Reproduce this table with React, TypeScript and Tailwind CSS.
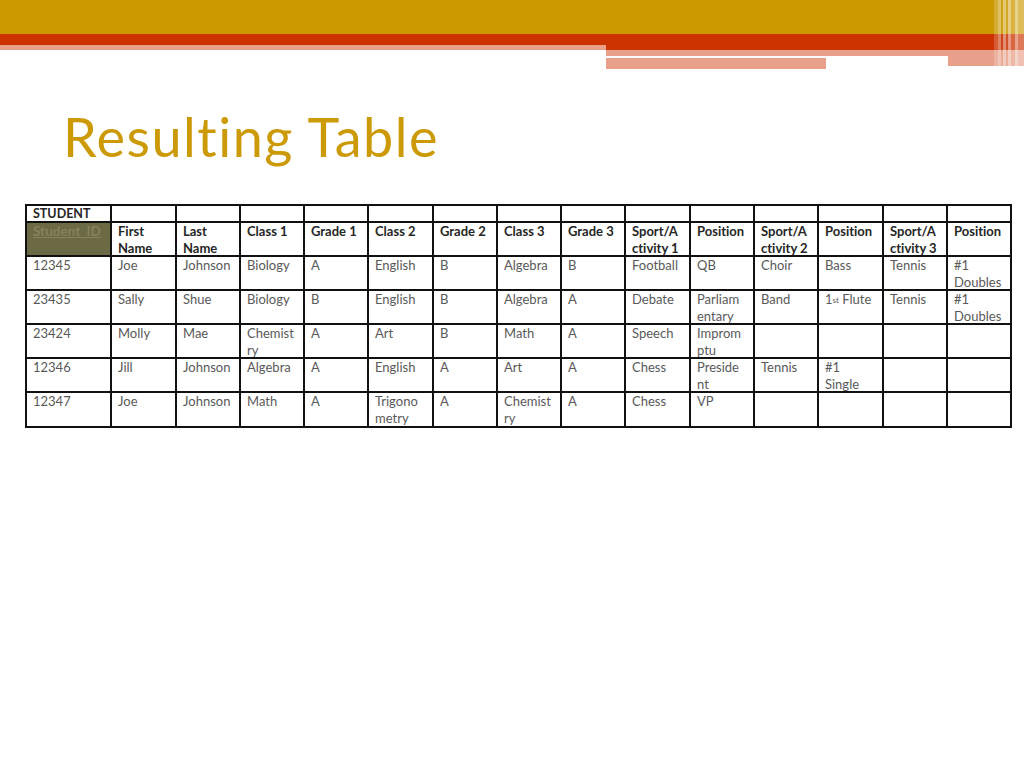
import React from "react";

type Cell = string[] | React.ReactNode;

const colWidths = "grid-cols-[83px_63px_62px_62px_62px_63px_62px_62px_62px_63px_62px_62px_63px_62px_62px]";

const headers: string[][] = [
  ["First", "Name"],
  ["Last", "Name"],
  ["Class 1"],
  ["Grade 1"],
  ["Class 2"],
  ["Grade 2"],
  ["Class 3"],
  ["Grade 3"],
  ["Sport/A", "ctivity 1"],
  ["Position"],
  ["Sport/A", "ctivity 2"],
  ["Position"],
  ["Sport/A", "ctivity 3"],
  ["Position"],
];

const firstFlute = (
  <>
    1<sup className="relative -top-[1px] text-[8px]">st</sup> Flute
  </>
);

const rows: Cell[][] = [
  [["12345"], ["Joe"], ["Johnson"], ["Biology"], ["A"], ["English"], ["B"], ["Algebra"], ["B"], ["Football"], ["QB"], ["Choir"], ["Bass"], ["Tennis"], ["#1", "Doubles"]],
  [["23435"], ["Sally"], ["Shue"], ["Biology"], ["B"], ["English"], ["B"], ["Algebra"], ["A"], ["Debate"], ["Parliam", "entary"], ["Band"], firstFlute, ["Tennis"], ["#1", "Doubles"]],
  [["23424"], ["Molly"], ["Mae"], ["Chemist", "ry"], ["A"], ["Art"], ["B"], ["Math"], ["A"], ["Speech"], ["Improm", "ptu"], [], [], [], []],
  [["12346"], ["Jill"], ["Johnson"], ["Algebra"], ["A"], ["English"], ["A"], ["Art"], ["A"], ["Chess"], ["Preside", "nt"], ["Tennis"], ["#1", "Single"], [], []],
  [["12347"], ["Joe"], ["Johnson"], ["Math"], ["A"], ["Trigono", "metry"], ["A"], ["Chemist", "ry"], ["A"], ["Chess"], ["VP"], [], [], [], []],
];

function Lines({ c }: { c: Cell }) {
  if (Array.isArray(c)) {
    return (
      <>
        {(c as string[]).map((l, i) => (
          <div key={i}>{l}</div>
        ))}
      </>
    );
  }
  return <div>{c}</div>;
}

function Banner() {
  return (
    <div className="relative h-[70px]">
      <div className="h-[34px] bg-[#cc9900]" />
      <div className="flex">
        <div className="w-[606px]">
          <div className="h-[11px] bg-[#cc3300]" />
          <div className="h-[5px] bg-[#e8a08a]" />
        </div>
        <div className="flex-1">
          <div className="h-[16px] bg-[#cc3300]" />
          <div className="h-[6px] bg-[#e8a08a]" />
          <div className="flex h-[2px]">
            <div className="w-[342px] bg-white" />
            <div className="flex-1 bg-[#e8a08a]" />
          </div>
          <div className="flex h-[11px] items-start">
            <div className="h-[11px] w-[220px] bg-[#e8a08a]" />
            <div className="w-[122px]" />
            <div className="h-[8px] flex-1 bg-[#e8a08a]" />
          </div>
        </div>
      </div>
      {/* pale vertical streaks on the right edge */}
      <div className="absolute right-0 top-0 flex h-[68px] w-[30px]">
        <div className="w-[4px] bg-white/20" />
        <div className="w-[3px] bg-white/40" />
        <div className="w-[2px] bg-white/10" />
        <div className="w-[3px] bg-white/45" />
        <div className="w-[2px] bg-white/15" />
        <div className="w-[3px] bg-white/50" />
        <div className="w-[4px] bg-white/25" />
        <div className="w-[3px] bg-white/55" />
        <div className="w-[6px] bg-white/35" />
      </div>
    </div>
  );
}

export default function App() {
  return (
    <div className="h-[768px] w-[1024px] overflow-hidden bg-white [font-variant-ligatures:none]">
      <Banner />
      <div className="pl-[63px] pt-[36px]">
        <h1 className="font-['Lato',sans-serif] text-[54px] leading-[62px] tracking-[1.5px] text-[#cc9a06]">Resulting Table</h1>
      </div>
      <div className="ml-[25px] mt-[36px] w-fit">
        <div className={`grid ${colWidths} gap-[2px] bg-[#111] p-[2px] font-['Lato','Noto_Sans',sans-serif] text-[13px] leading-[17px] text-[#595959]`}>
          <div className="h-[15px] bg-white pl-[6px] text-[12.5px] font-bold leading-[16px] text-[#262626]">STUDENT</div>
          {Array.from({ length: 14 }).map((_, i) => (
            <div key={`e${i}`} className="h-[15px] bg-white" />
          ))}
          <div className="h-[32px] bg-[#6b6a45] pl-[6px] text-[13.5px] font-bold text-[#84825a] underline">Student_ID</div>
          {headers.map((h, i) => (
            <div key={`h${i}`} className="h-[32px] bg-white pl-[6px] font-bold text-[#262626]">
              <Lines c={h} />
            </div>
          ))}
          {rows.map((r, ri) =>
            r.map((c, ci) => (
              <div key={`${ri}-${ci}`} className={`bg-white pl-[6px] ${ri === 4 ? "h-[33px]" : "h-[32px]"}`}>
                <Lines c={c} />
              </div>
            ))
          )}
        </div>
      </div>
    </div>
  );
}
